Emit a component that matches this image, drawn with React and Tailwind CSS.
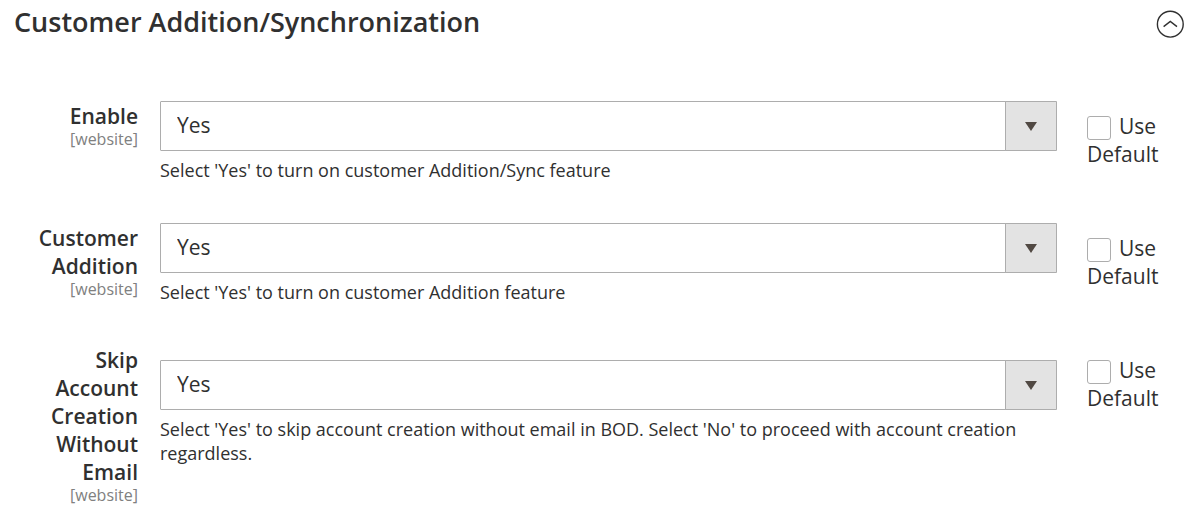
import { useId, useState } from "react";

const FIELDS = [
  {
    label: "Enable",
    note: "Select 'Yes' to turn on customer Addition/Sync feature",
    offset: "",
  },
  {
    label: "Customer Addition",
    note: "Select 'Yes' to turn on customer Addition feature",
    offset: "",
  },
  {
    label: "Skip Account Creation Without Email",
    note: "Select 'Yes' to skip account creation without email in BOD. Select 'No' to proceed with account creation regardless.",
    offset: "pt-[15px]",
  },
];

function Field({ label, note, offset }) {
  const id = useId();
  return (
    <div className="grid grid-cols-[124px_minmax(0,1fr)_127px] items-start">
      <div className="flex flex-col pt-px text-right">
        <label htmlFor={id} className="text-[21px] leading-7 font-semibold">
          {label}
        </label>
        <span className="text-base leading-[18px] text-[#808080]">[website]</span>
      </div>
      <div className={`pl-[22px] ${offset}`}>
        <div className="relative h-[50px]">
          <select
            id={id}
            defaultValue="Yes"
            className="h-full w-full appearance-none rounded-[1px] border border-[#adadad] bg-white pr-14 pl-4 text-[21px]"
          >
            <option>Yes</option>
            <option>No</option>
          </select>
          <span className="pointer-events-none absolute inset-y-0 right-0 flex w-[52px] items-center justify-center rounded-r-[1px] border border-[#adadad] bg-[#e3e3e3]">
            <svg width="12" height="9" viewBox="0 0 12 9" fill="#514943" aria-hidden="true">
              <path d="M0 0h12L6 9z" />
            </svg>
          </span>
        </div>
        <p className="mt-[7px] text-lg leading-6">{note}</p>
      </div>
      <label className="pt-[11px] pl-[30px] text-[21px] leading-7">
        <input
          type="checkbox"
          className="mr-2 inline-block size-6 appearance-none rounded-[3px] border border-[#adadad] bg-white align-middle checked:bg-[#514943]"
        />
        Use Default
      </label>
    </div>
  );
}

export default function App() {
  const [open, setOpen] = useState(true);
  return (
    <main className="bg-white pr-[14px] pl-[14px] font-['Open_Sans',sans-serif] text-[#303030]">
      <header className="flex items-start justify-between pt-1">
        <h1 className="text-[27px] leading-9 font-semibold">Customer Addition/Synchronization</h1>
        <button type="button" aria-label="Toggle section" aria-expanded={open} onClick={() => setOpen(!open)} className="mt-[6px]">
          <svg width="28" height="28" viewBox="0 0 28 28" fill="none" stroke="#303030" strokeWidth="1.4" aria-hidden="true">
            <circle cx="14.3" cy="14.2" r="12.9" />
            <path d="M7.6 16.6l6.7-5.2 6.7 5.2" />
          </svg>
        </button>
      </header>
      {open && (
        <form className="flex flex-col gap-[41px] pt-[61px]">
          {FIELDS.map((field) => (
            <Field key={field.label} {...field} />
          ))}
        </form>
      )}
    </main>
  );
}
